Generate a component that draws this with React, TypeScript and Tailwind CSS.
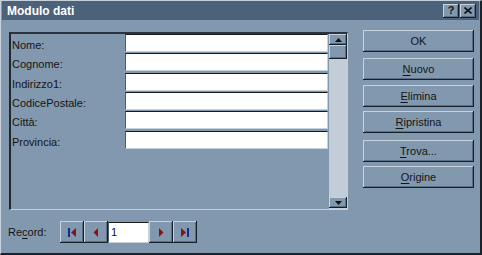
const raised =
  "bg-[#8298ae] shadow-[inset_-1px_-1px_#16202a,inset_1px_1px_#c8d2dc,inset_-2px_-2px_#5b6e83]";
const sunken =
  "bg-white border-t border-l border-t-[#1a1a1a] border-l-[#4c5c6c] border-b border-r border-b-[#c6d0da] border-r-[#c6d0da]";

const fields = [
  { label: "Nome:", h: "h-[19px]" },
  { label: "Cognome:", h: "h-[20px]" },
  { label: "Indirizzo1:", h: "h-[19px]" },
  { label: "CodicePostale:", h: "h-[19px]" },
  { label: "Città:", h: "h-[20px]" },
  { label: "Provincia:", h: "h-[19px]" },
];

const buttons = [
  { key: "", rest: "OK", mt: "mt-0" },
  { key: "N", rest: "uovo", mt: "mt-[6px]" },
  { key: "E", rest: "limina", mt: "mt-[5px]" },
  { key: "R", rest: "ipristina", mt: "mt-[4px]" },
  { key: "T", rest: "rova...", mt: "mt-[7px]" },
  { key: "O", rest: "rigine", mt: "mt-[4px]" },
];

const Tri = ({ dir }: { dir: "up" | "down" }) => (
  <svg width="7" height="4" viewBox="0 0 7 4">
    {dir === "up" ? <polygon points="3.5,0 7,4 0,4" fill="#111" /> : <polygon points="0,0 7,0 3.5,4" fill="#111" />}
  </svg>
);

const NavIcon = ({ kind }: { kind: "first" | "prev" | "next" | "last" }) => (
  <svg width="12" height="11" viewBox="0 0 12 11">
    {kind === "first" && (
      <>
        <rect x="2" y="1" width="2" height="9" fill="#1d2a8c" />
        <polygon points="10,1 10,10 5,5.5" fill="#8a1414" />
      </>
    )}
    {kind === "prev" && <polygon points="8,1 8,10 3.5,5.5" fill="#8a1414" />}
    {kind === "next" && <polygon points="4,1 4,10 8.5,5.5" fill="#8a1414" />}
    {kind === "last" && (
      <>
        <polygon points="2,1 2,10 7,5.5" fill="#8a1414" />
        <rect x="8" y="1" width="2" height="9" fill="#1d2a8c" />
      </>
    )}
  </svg>
);

export default function App() {
  return (
    <div
      className="w-[482px] h-[255px] bg-[#8298ae] flex flex-col border-t border-l border-t-[#c8d2dc] border-l-[#c8d2dc] border-b-2 border-r-2 border-b-[#1a232c] border-r-[#1a232c] text-[#151515] text-[11px] overflow-hidden"
      style={{ fontFamily: '"Liberation Sans", Arial, sans-serif' }}
    >
      {/* title bar */}
      <div className="h-[19px] mx-px bg-[#4c627b] flex items-center pl-[5px] pr-[3px]">
        <span className="text-white font-bold text-[12px] flex-1">Modulo dati</span>
        <div className={`w-[16px] h-[14px] ${raised} flex items-center justify-center font-bold text-[11px] leading-none`}>?</div>
        <div className={`ml-px w-[16px] h-[14px] ${raised} flex items-center justify-center`}>
          <svg width="8" height="7" viewBox="0 0 8 7">
            <path d="M0.5 0.5 L7.5 6.5 M7.5 0.5 L0.5 6.5" stroke="#111" strokeWidth="1.6" />
          </svg>
        </div>
      </div>

      <div className="flex">
        {/* form frame */}
        <div className="ml-[8px] mt-[12px] w-[339px] h-[178px] flex border-t-2 border-l-2 border-t-[#2a3440] border-l-[#1f2830] border-b border-r border-b-[#c6d0da] border-r-[#c6d0da]">
          <div className="flex-1 flex flex-col">
            {fields.map((f) => (
              <div key={f.label} className={`${f.h} flex`}>
                <div className="w-[114px] pl-[1px] pt-[5px] leading-[13px]">{f.label}</div>
                <div className={`w-[203px] h-[18px] ${sunken}`} />
              </div>
            ))}
          </div>
          <div className="w-[18px] bg-[#c3cdd7] flex flex-col">
            <div className={`h-[11px] ${raised} flex items-center justify-center`}>
              <Tri dir="up" />
            </div>
            <div className={`h-[14px] ${raised}`} />
            <div className="flex-1" />
            <div className={`h-[11px] mb-px ${raised} flex items-center justify-center`}>
              <Tri dir="down" />
            </div>
          </div>
        </div>

        {/* right buttons */}
        <div className="ml-[15px] mt-[10px] w-[111px] flex flex-col">
          {buttons.map((b) => (
            <div key={b.rest} className={`${b.mt} h-[22px] ${raised} flex items-center justify-center`}>
              <span>
                {b.key && <span className="underline underline-offset-2">{b.key}</span>}
                {b.rest}
              </span>
            </div>
          ))}
        </div>
      </div>

      {/* record navigation */}
      <div className="mt-[11px] ml-[7px] flex items-center h-[22px]">
        <span className="w-[52px]">
          Re<span className="underline underline-offset-2">c</span>ord:
        </span>
        <div className={`w-[24px] h-[22px] ${raised} flex items-center justify-center`}>
          <NavIcon kind="first" />
        </div>
        <div className={`w-[24px] h-[22px] ${raised} flex items-center justify-center`}>
          <NavIcon kind="prev" />
        </div>
        <div className={`w-[41px] h-[21px] ${sunken} pl-[2px] leading-[19px]`}>1</div>
        <div className={`w-[24px] h-[22px] ${raised} flex items-center justify-center`}>
          <NavIcon kind="next" />
        </div>
        <div className={`w-[24px] h-[22px] ${raised} flex items-center justify-center`}>
          <NavIcon kind="last" />
        </div>
      </div>
    </div>
  );
}
